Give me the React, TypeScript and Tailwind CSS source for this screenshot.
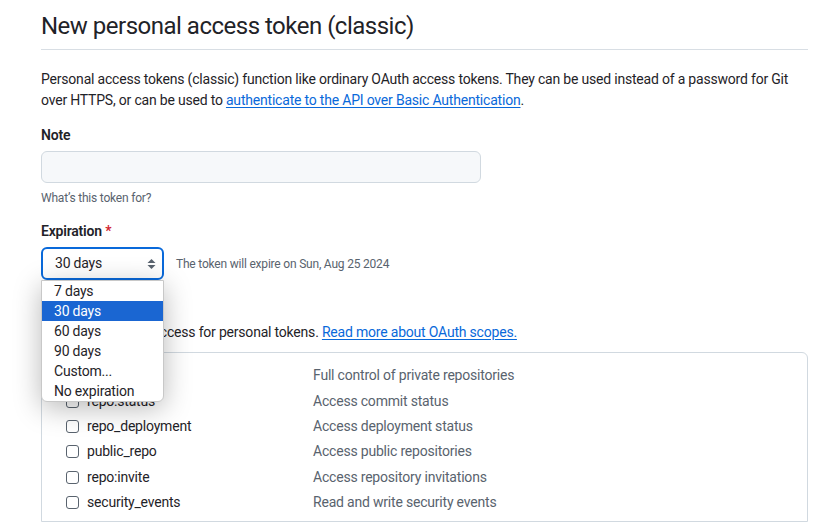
import React from 'react';

const font = { fontFamily: 'Roboto, "Liberation Sans", sans-serif' };

const options = ['7 days', '30 days', '60 days', '90 days', 'Custom...', 'No expiration'];

const scopes = [
  { name: 'repo', desc: 'Full control of private repositories', parent: true },
  { name: 'repo:status', desc: 'Access commit status' },
  { name: 'repo_deployment', desc: 'Access deployment status' },
  { name: 'public_repo', desc: 'Access public repositories' },
  { name: 'repo:invite', desc: 'Access repository invitations' },
  { name: 'security_events', desc: 'Read and write security events' },
];

function Checkbox() {
  return (
    <span className="inline-block h-[13px] w-[13px] shrink-0 rounded-[3px] border border-[#59636e] bg-white" />
  );
}

function SelectArrows() {
  return (
    <svg width="9" height="12" viewBox="0 0 9 12" className="text-[#59636e]">
      <path d="M4.5 1 L8.5 5 H0.5 Z" fill="currentColor" />
      <path d="M4.5 11 L8.5 7 H0.5 Z" fill="currentColor" />
    </svg>
  );
}

export default function App() {
  return (
    <div className="min-h-[522px] w-[840px] overflow-hidden bg-white text-[#1f2328] tracking-[-0.2px]" style={font}>
      <div className="ml-[41px] w-[767px] pt-[8px]">
        <h1 className="border-b border-[#d8dee4] pb-[5px] text-[24px] leading-[36px] font-normal tracking-[-0.5px]">
          New personal access token (classic)
        </h1>

        <p className="mt-[19px] text-[14px] leading-[21px]">
          Personal access tokens (classic) function like ordinary OAuth access tokens. They can be used
          instead of a password for Git over HTTPS, or can be used to{' '}
          <a className="text-[#0969da] underline underline-offset-2">
            authenticate to the API over Basic Authentication
          </a>
          .
        </p>

        <div className="mt-[14px]">
          <label className="block text-[14px] leading-[21px] font-semibold">Note</label>
          <div className="mt-[5px] h-[32px] w-[440px] rounded-[6px] border border-[#d1d9e0] bg-[#f6f8fa]" />
          <p className="mt-[6px] text-[12px] leading-[18px] text-[#59636e]">What’s this token for?</p>
        </div>

        <div className="mt-[14px]">
          <label className="block text-[14px] leading-[21px] font-semibold">
            Expiration <span className="text-[#d1242f]">*</span>
          </label>
          <div className="relative mt-[5px] flex items-center gap-3">
            <div className="flex h-[33px] w-[123px] items-center justify-between rounded-[6px] border-2 border-[#0969da] bg-white pr-[6px] pl-[12px] text-[14px]">
              <span>30 days</span>
              <SelectArrows />
            </div>
            <span className="text-[12px] text-[#59636e]">The token will expire on Sun, Aug 25 2024</span>

            <ul className="absolute top-[33px] left-0 z-10 w-[123px] rounded-b-[6px] border border-[#c8c8c8] bg-white py-0 text-[14px] leading-[20px] shadow-[0_6px_28px_rgba(0,0,0,0.28)]">
              {options.map((o) => (
                <li
                  key={o}
                  className={
                    o === '30 days' ? 'bg-[#1a66d2] pl-[12px] text-white' : 'pl-[12px] text-[#1f2328]'
                  }
                >
                  {o}
                </li>
              ))}
            </ul>
          </div>
        </div>

        <div className="mt-[18px]">
          <h2 className="text-[14px] leading-[21px] font-semibold">Select scopes</h2>
          <p className="mt-[3px] text-[14px] leading-[21px]">
            Scopes define the access for personal tokens.{' '}
            <a className="text-[#0969da] underline underline-offset-2">Read more about OAuth scopes.</a>
          </p>
        </div>

        <div className="mt-[9px] rounded-t-[6px] border border-[#d1d9e0] pt-[10px] pb-[6px]">
          {scopes.map((s) => (
            <div key={s.name} className="grid h-[25.4px] grid-cols-[271px_1fr] items-center text-[14px]">
              <div className={s.parent ? 'flex items-center gap-2 pl-[7px]' : 'flex items-center gap-2 pl-[24px]'}>
                <Checkbox />
                <span className={s.parent ? 'font-semibold' : ''}>{s.name}</span>
              </div>
              <span className="text-[#59636e]">{s.desc}</span>
            </div>
          ))}
        </div>
      </div>
    </div>
  );
}
